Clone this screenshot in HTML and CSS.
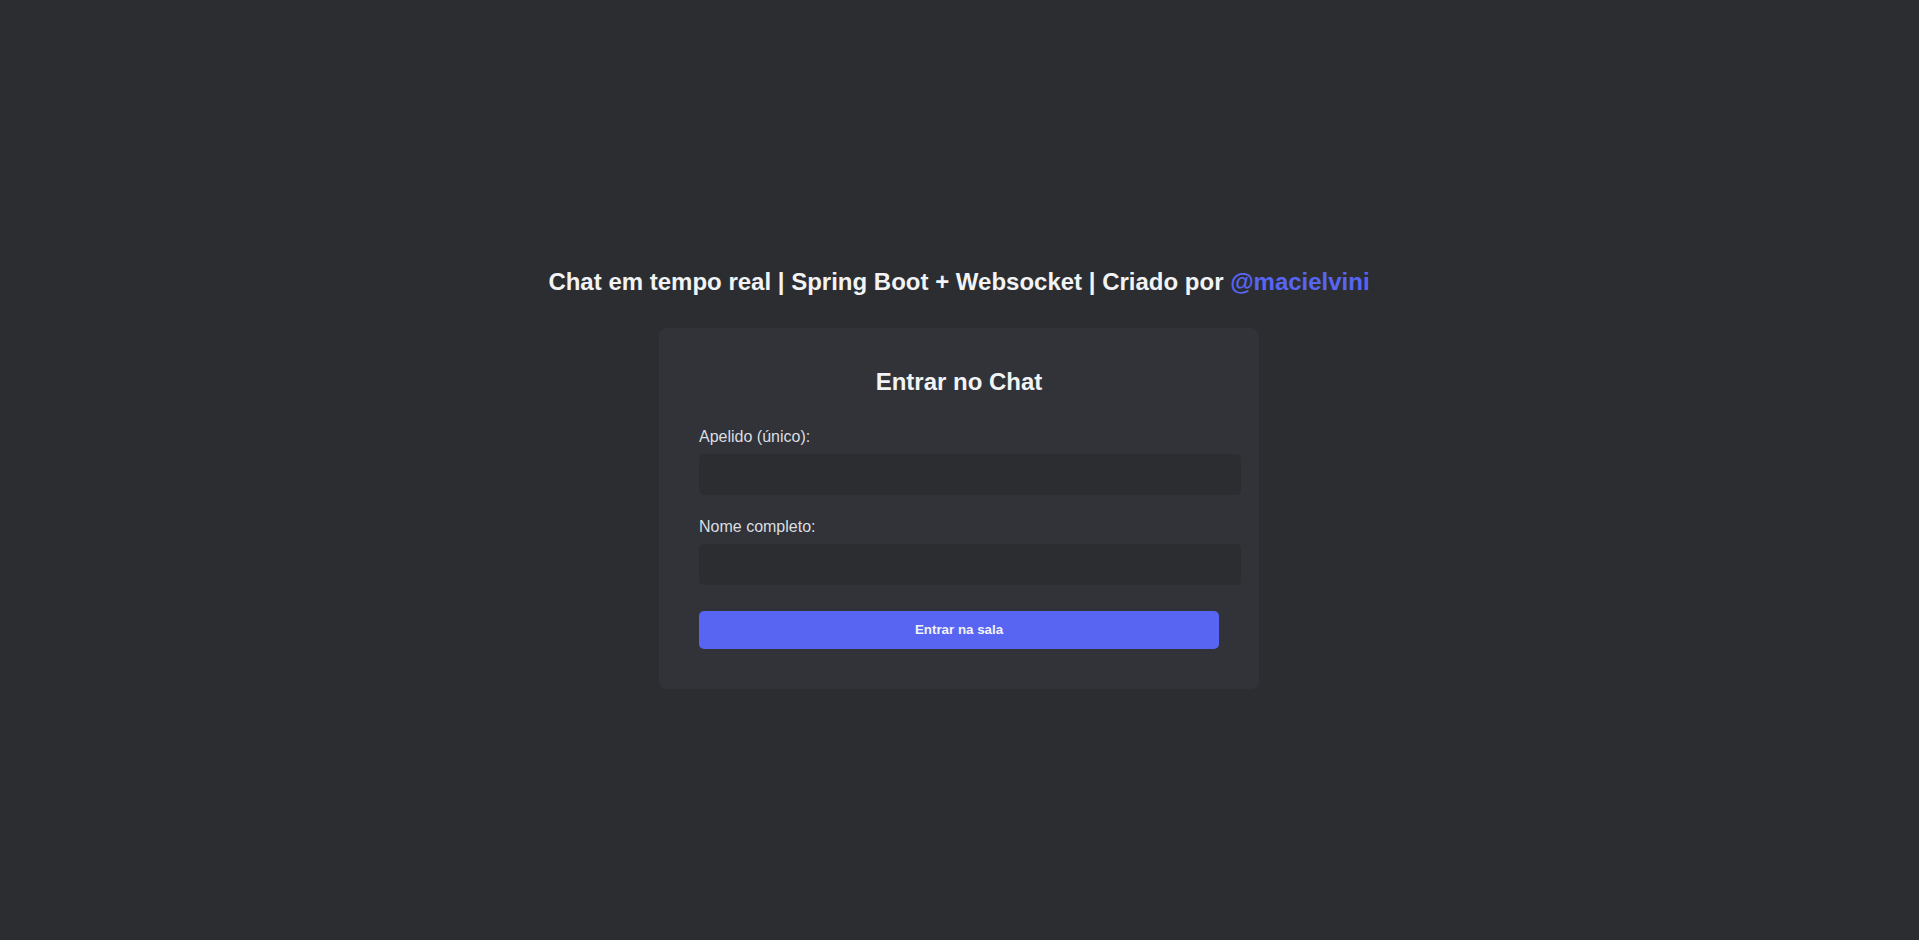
FILE: index.html
```html
<!DOCTYPE html>
<html lang="pt-BR">
<head>
<meta charset="utf-8">
<title>Chat em tempo real</title>
<link rel="stylesheet" href="styles.css">
</head>
<body>
  <main class="page">
    <h2 class="page-title">Chat em tempo real | Spring Boot + Websocket | Criado por <a class="author" href="#">@macielvini</a></h2>
    <section class="card">
      <h2 class="card-title">Entrar no Chat</h2>
      <form class="form">
        <div class="form-group">
          <label class="label" for="nickname">Apelido (único):</label>
          <input class="input" id="nickname" type="text">
        </div>
        <div class="form-group">
          <label class="label" for="fullname">Nome completo:</label>
          <input class="input" id="fullname" type="text">
        </div>
        <button class="btn" type="button">Entrar na sala</button>
      </form>
    </section>
  </main>
</body>
</html>
```

FILE: styles.css
```css
* { box-sizing: border-box; }

html, body {
  margin: 0;
  padding: 0;
}

body {
  background: #2b2d31;
  color: #f2f3f5;
  font-family: "Liberation Sans", Arial, sans-serif;
}

.page {
  height: 100vh;
  padding-top: 16px;
  padding-right: 1px;
  display: flex;
  flex-direction: column;
  align-items: center;
  justify-content: center;
}

.page-title {
  margin: 0 0 32px;
  font-size: 24px;
  font-weight: bold;
  color: #f2f3f5;
  text-align: center;
}

.author {
  color: #5865f2;
  text-decoration: none;
}

.card {
  width: 600px;
  background: #313338;
  border-radius: 8px;
  padding: 40px;
}

.card-title {
  margin: 0 0 32px;
  font-size: 24px;
  font-weight: bold;
  text-align: center;
  color: #f2f3f5;
}

.form {
  display: flex;
  flex-direction: column;
}

.form-group {
  display: flex;
  flex-direction: column;
  margin-bottom: 23px;
}

.label {
  font-size: 16px;
  color: #dbdee1;
  margin-bottom: 8px;
  line-height: normal;
}

.input {
  box-sizing: content-box;
  width: 100%;
  height: 19px;
  padding: 10px;
  border: 1px solid #2b2d31;
  border-radius: 5px;
  background: #2b2d31;
  color: #f2f3f5;
  font-family: "Liberation Sans", Arial, sans-serif;
  font-size: 16px;
  outline: none;
}

.btn {
  margin-top: 3px;
  width: 100%;
  height: 38px;
  border: none;
  border-radius: 5px;
  background: #5865f2;
  color: #f2f3f5;
  font-family: "Liberation Sans", Arial, sans-serif;
  font-size: 13.333px;
  font-weight: bold;
  cursor: pointer;
}
```
